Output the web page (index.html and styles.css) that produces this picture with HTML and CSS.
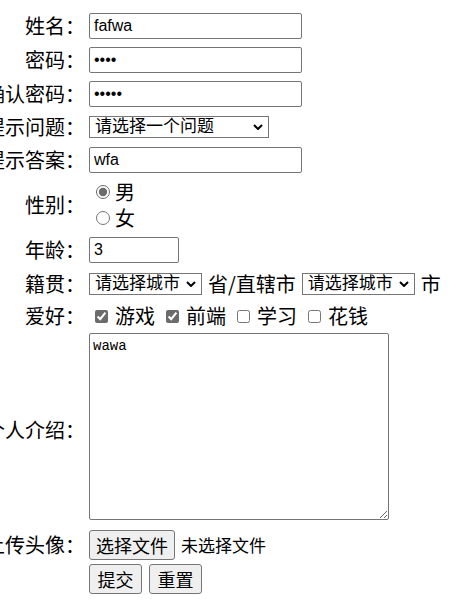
FILE: index.html
```html
<!DOCTYPE html>
<html lang="zh">
<head>
    <meta charset="UTF-8">
    <meta name="viewport" content="width=device-width, initial-scale=1.0">
    <link rel="stylesheet" href="styles.css">
</head>
<body>
    <form class="reg-form">
        <label class="label">姓名：</label>
        <div class="field"><input class="text" type="text" value="fafwa"></div>

        <label class="label">密码：</label>
        <div class="field"><input class="text" type="password" value="1234"></div>

        <label class="label">确认密码：</label>
        <div class="field"><input class="text" type="password" value="12345"></div>

        <label class="label">提示问题：</label>
        <div class="field field-short">
            <span class="pick-wrap">
                <select class="pick pick-wide">
                    <option>请选择一个问题</option>
                </select>
                <svg class="chev" width="10" height="6" viewBox="0 0 10 6"><path d="M1 1 L5 5 L9 1"/></svg>
            </span>
        </div>

        <label class="label">提示答案：</label>
        <div class="field"><input class="text" type="text" value="wfa"></div>

        <label class="label">性别：</label>
        <div class="field radios">
            <label class="opt"><input type="radio" name="sex" checked>男</label>
            <label class="opt"><input type="radio" name="sex">女</label>
        </div>

        <label class="label">年龄：</label>
        <div class="field"><input class="text text-age" type="text" value="3"></div>

        <label class="label">籍贯：</label>
        <div class="field inline">
            <span class="pick-wrap">
                <select class="pick"><option>请选择城市</option></select>
                <svg class="chev" width="10" height="6" viewBox="0 0 10 6"><path d="M1 1 L5 5 L9 1"/></svg>
            </span>
            <span>省/直辖市</span>
            <span class="pick-wrap">
                <select class="pick"><option>请选择城市</option></select>
                <svg class="chev" width="10" height="6" viewBox="0 0 10 6"><path d="M1 1 L5 5 L9 1"/></svg>
            </span>
            <span>市</span>
        </div>

        <label class="label">爱好：</label>
        <div class="field field-hobby checks">
            <label class="opt"><input type="checkbox" checked>游戏</label>
            <label class="opt"><input type="checkbox" checked>前端</label>
            <label class="opt"><input type="checkbox">学习</label>
            <label class="opt"><input type="checkbox">花钱</label>
        </div>

        <label class="label">个人介绍：</label>
        <div class="field field-area"><textarea class="intro">wawa</textarea></div>

        <label class="label">上传头像：</label>
        <div class="field file">
            <button type="button" class="btn btn-file">选择文件</button>
            <span class="file-name">未选择文件</span>
        </div>

        <span class="label"></span>
        <div class="field actions">
            <button type="submit" class="btn">提交</button>
            <button type="reset" class="btn">重置</button>
        </div>
    </form>
</body>
</html>
```

FILE: styles.css
```css
html, body {
    margin: 0;
    background: #fff;
    color: #000;
}

.reg-form {
    display: grid;
    grid-template-columns: 85px auto;
    column-gap: 4px;
    row-gap: 4px;
    padding-top: 11px;
    font-family: "Noto Sans CJK SC", sans-serif;
    font-size: 20px;
    line-height: 26px;
}

/* 标签右对齐，超出部分往左边溢出 */
.label {
    display: flex;
    justify-content: flex-end;
    align-items: center;
    white-space: nowrap;
}

.field {
    display: flex;
    align-items: center;
    min-height: 30px;
}
.field-short { min-height: 28px; }
.field-hobby { min-height: 26px; }

.text {
    box-sizing: border-box;
    width: 213px;
    height: 26px;
    margin: 0;
    padding: 0 4px;
    border: 1px solid #767676;
    border-radius: 2px;
    font-family: "Liberation Sans", "Noto Sans CJK SC", sans-serif;
    font-size: 16px;
    color: #000;
    background: #fff;
}
.text-age { width: 90px; }

.pick-wrap {
    position: relative;
    display: inline-flex;
}

.pick {
    appearance: none;
    box-sizing: border-box;
    width: 113px;
    height: 22px;
    margin: 0;
    padding: 0 0 0 5px;
    border: 1px solid #767676;
    border-radius: 0;
    font-family: "Liberation Sans", "Noto Sans CJK SC", sans-serif;
    font-size: 17px;
    line-height: 20px;
    color: #000;
    background: #fff;
}
.pick-wide { width: 180px; }

/* 下拉箭头 */
.chev {
    position: absolute;
    right: 6px;
    top: 8px;
    pointer-events: none;
}
.chev path {
    fill: none;
    stroke: #000;
    stroke-width: 2;
}

.inline { gap: 6px; }

.radios {
    flex-direction: column;
    align-items: flex-start;
}

.opt {
    display: flex;
    align-items: center;
    height: 26px;
}

.radios input {
    width: 14px;
    height: 14px;
    margin: 0 5px 0 7px;
    accent-color: #6b6b6b;
}

.checks { gap: 11px; }
.checks input {
    margin: 0 7px 0 0;
    width: 13px;
    height: 13px;
    accent-color: #6b6b6b;
}
.checks .opt:first-child { margin-left: 6px; }

.field-area {
    align-items: flex-start;
    padding-bottom: 6px;
}

.intro {
    box-sizing: border-box;
    width: 300px;
    height: 187px;
    margin: 0;
    padding: 4px 3px;
    border: 1px solid #767676;
    border-radius: 2px;
    font-family: "Liberation Mono", monospace;
    font-size: 14px;
    line-height: 17px;
    color: #000;
    resize: both;
}

.btn {
    box-sizing: border-box;
    height: 30px;
    margin: 0;
    padding: 0 6px;
    border: 1px solid #767676;
    border-radius: 3px;
    background: #efefef;
    font-family: "Noto Sans CJK SC", sans-serif;
    font-size: 18px;
    line-height: 26px;
    color: #000;
}
.btn-file { width: 86px; }

.file { gap: 6px; }
.file-name { font-size: 17px; }

.actions { gap: 7px; }
.actions .btn { width: 53px; }
```
